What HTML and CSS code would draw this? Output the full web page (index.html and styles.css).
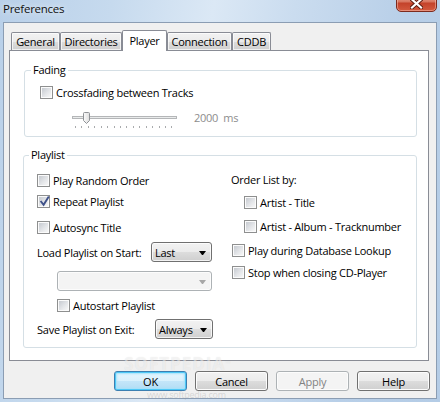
FILE: index.html
```html
<!DOCTYPE html>
<html>
<head>
<meta charset="utf-8">
<title>Preferences</title>
<link rel="stylesheet" href="styles.css">
</head>
<body>
<div class="window">
  <div class="titlebar">
    <span class="title">Preferences</span>
    <div class="close">
      <svg width="13" height="11" viewBox="0 0 13 11"><path d="M2 1.5 L11 9.5 M11 1.5 L2 9.5" stroke="#5a1a10" stroke-width="4" stroke-linecap="square"/><path d="M2 1.5 L11 9.5 M11 1.5 L2 9.5" stroke="#fff" stroke-width="2.2" stroke-linecap="square"/></svg>
    </div>
  </div>
  <div class="client">
    <div class="tabs">
      <div class="tab t-general">General</div>
      <div class="tab t-dirs">Directories</div>
      <div class="tab active t-player">Player</div>
      <div class="tab t-conn">Connection</div>
      <div class="tab t-cddb">CDDB</div>
    </div>
    <div class="panel">
      <fieldset class="group fading">
        <legend>Fading</legend>
        <div class="fading-body">
          <div class="row"><span class="cb"></span><span>Crossfading between Tracks</span></div>
          <div class="slider-row">
            <svg class="slider" width="110" height="24" viewBox="0 0 110 24">
              <defs>
                <linearGradient id="thumb" x1="0" y1="0" x2="1" y2="0">
                  <stop offset="0" stop-color="#fbfbfb"/>
                  <stop offset="1" stop-color="#dedede"/>
                </linearGradient>
              </defs>
              <rect x="1.5" y="8.5" width="104" height="2" fill="#e9ebeb" stroke="#b4b6b8"/>
              <path d="M12.5 5.5 Q12.5 4.5 13.5 4.5 H17.5 Q18.5 4.5 18.5 5.5 V12.5 L15.5 15.5 L12.5 12.5 Z" fill="url(#thumb)" stroke="#8f9296"/>
              <g stroke="#a9abad" stroke-width="1">
                <line x1="4.5" y1="18" x2="4.5" y2="20"/>
                <line x1="10.5" y1="18" x2="10.5" y2="20"/>
                <line x1="17.5" y1="18" x2="17.5" y2="20"/>
                <line x1="23.5" y1="18" x2="23.5" y2="20"/>
                <line x1="30.5" y1="18" x2="30.5" y2="20"/>
                <line x1="36.5" y1="18" x2="36.5" y2="20"/>
                <line x1="43.5" y1="18" x2="43.5" y2="20"/>
                <line x1="49.5" y1="18" x2="49.5" y2="20"/>
                <line x1="55.5" y1="18" x2="55.5" y2="20"/>
                <line x1="62.5" y1="18" x2="62.5" y2="20"/>
                <line x1="68.5" y1="18" x2="68.5" y2="20"/>
                <line x1="75.5" y1="18" x2="75.5" y2="20"/>
                <line x1="81.5" y1="18" x2="81.5" y2="20"/>
                <line x1="88.5" y1="18" x2="88.5" y2="20"/>
                <line x1="94.5" y1="18" x2="94.5" y2="20"/>
                <line x1="100.5" y1="18" x2="100.5" y2="20"/>
              </g>
            </svg>
            <span class="slider-value">2000&nbsp; ms</span>
          </div>
        </div>
      </fieldset>

      <fieldset class="group playlist">
        <legend>Playlist</legend>
        <div class="playlist-body">
          <div class="col col-left">
            <div class="row r1"><span class="cb"></span><span>Play Random Order</span></div>
            <div class="row r2"><span class="cb checked"><svg width="13" height="13" viewBox="0 0 13 13"><path d="M3.6 6 L6.6 9.8 L11.8 1.6" fill="none" stroke="#3f5189" stroke-width="1.9"/></svg></span><span>Repeat Playlist</span></div>
            <div class="row r3"><span class="cb"></span><span>Autosync Title</span></div>
            <div class="row r4"><span class="lbl lbl-load">Load Playlist on Start:</span><div class="combo combo-last"><span>Last</span><span class="arrow"></span></div></div>
            <div class="row r5"><div class="combo disabled combo-empty"><span class="arrow"></span></div></div>
            <div class="row r6"><span class="cb"></span><span>Autostart Playlist</span></div>
            <div class="row r7"><span class="lbl lbl-save">Save Playlist on Exit:</span><div class="combo combo-always"><span>Always</span><span class="arrow"></span></div></div>
          </div>
          <div class="col col-right">
            <div class="row q1"><span class="order-lbl">Order List by:</span></div>
            <div class="row q2 indent"><span class="cb"></span><span>Artist - Title</span></div>
            <div class="row q3 indent"><span class="cb"></span><span>Artist - Album - Tracknumber</span></div>
            <div class="row q4"><span class="cb"></span><span>Play during Database Lookup</span></div>
            <div class="row q5"><span class="cb"></span><span>Stop when closing CD-Player</span></div>
          </div>
        </div>
      </fieldset>
    </div>
    <div class="buttons">
      <div class="btn default">OK</div>
      <div class="btn">Cancel</div>
      <div class="btn disabled">Apply</div>
      <div class="btn">Help</div>
    </div>
  </div>
  <div class="wm-logo">SOFTPEDIA<span class="tm">™</span></div>
  <div class="wm-url">www.softpedia.com</div>
</div>
</body>
</html>
```
FILE: styles.css
```css
body {
  margin: 0;
}

.window {
  position: relative;
  width: 440px;
  height: 402px;
  overflow: hidden;
  display: flex;
  flex-direction: column;
  background: linear-gradient(100deg, #b9d0e9 0%, #c6daee 22%, #dbe8f5 42%, #cadcef 58%, #b8cfe8 80%, #b4cce6 100%);
  font-family: "Open Sans", "Segoe UI", sans-serif;
  font-size: 11px;
  letter-spacing: -0.25px;
  color: #000;
}

.titlebar {
  height: 22px;
  display: flex;
  align-items: flex-start;
  flex: none;
}

.title {
  margin: 1px 0 0 3px;
  line-height: 16px;
  font-size: 11.5px;
  color: #101010;
  text-shadow: 0 0 6px rgba(255, 255, 255, 0.9);
}

.close {
  margin: -6px 3px 0 auto;
  width: 41px;
  height: 18px;
  box-sizing: border-box;
  border: 1px solid #7d2a1d;
  border-radius: 0 0 5px 5px;
  background: linear-gradient(#eaa898 0%, #d97a64 40%, #c4432b 52%, #d35a3f 100%);
  box-shadow: inset 0 0 0 1px rgba(255, 210, 200, 0.45);
  display: flex;
  align-items: center;
  justify-content: center;
  padding-top: 1px;
}

.close svg {
  display: block;
}

.client {
  margin: 0 3px;
  height: 377px;
  box-sizing: border-box;
  border: 1px solid #8b9db3;
  background: #f0f0f0;
  padding: 7px 7px 0 5px;
  display: flex;
  flex-direction: column;
  flex: none;
}

/* Tabs */
.tabs {
  display: flex;
  align-items: flex-end;
  height: 20px;
  margin-left: 2px;
  flex: none;
}

.tab {
  height: 18px;
  box-sizing: border-box;
  border: 1px solid #898c95;
  border-bottom: none;
  border-radius: 2px 2px 0 0;
  background: linear-gradient(#f2f2f2 0%, #ebebeb 50%, #dddddd 50%, #cfcfcf 100%);
  box-shadow: inset 0 0 0 1px rgba(255, 255, 255, 0.7);
  display: flex;
  align-items: center;
  justify-content: center;
  flex: none;
}

.tab.active {
  height: 21px;
  margin-bottom: -1px;
  padding-bottom: 2px;
  background: #fff;
  box-shadow: none;
  position: relative;
  z-index: 1;
}

.t-general { width: 49px; }
.t-dirs { width: 62px; }
.t-player { width: 45px; }
.t-conn { width: 65px; }
.t-cddb { width: 39px; }

.panel {
  height: 311px;
  box-sizing: border-box;
  border: 1px solid #898c95;
  background: #fff;
  padding-top: 11px;
  flex: none;
}

/* Group boxes */
.group {
  margin: 0;
  padding: 0;
  min-width: 0;
  box-sizing: border-box;
  border: 1px solid #d5dfe5;
  border-radius: 3px;
}

.group legend {
  padding: 0 2px;
  margin-left: 6px;
  line-height: 16px;
}

.fading {
  margin-left: 14px;
  width: 393px;
}

.playlist {
  margin: 10px 0 0 13px;
  width: 394px;
}

.playlist legend {
  margin-left: 5px;
}

.fading-body {
  padding: 4px 0 4px 15px;
}

.row {
  display: flex;
  align-items: center;
  height: 20px;
  white-space: nowrap;
}

.slider-row {
  display: flex;
  align-items: flex-start;
  height: 24px;
  margin-top: 6px;
}

.slider {
  display: block;
  margin-left: 31px;
  flex: none;
}

.slider-value {
  margin: 2px 0 0 13px;
  line-height: 16px;
  color: #8d8d8d;
}

/* Checkboxes */
.cb {
  position: relative;
  width: 13px;
  height: 13px;
  box-sizing: border-box;
  border: 1px solid #8e8f8f;
  padding: 1px;
  background: linear-gradient(135deg, #c6cad0 0%, #e3e5e8 55%, #f7f7f7 100%) content-box, #fbfbfb;
  margin-right: 3px;
  flex: none;
}

.cb.checked svg {
  position: absolute;
  left: -1px;
  top: -1px;
}

/* Playlist columns */
.playlist-body {
  display: grid;
  grid-template-columns: 195px 1fr;
  padding: 0 0 8px 13px;
}

.col-left {
  padding-top: 7px;
}

.r2 { margin-top: 1px; }
.r3 { margin-top: 6px; }
.r4 { margin-top: 5px; }
.r5 { margin-top: 9px; padding-left: 20px; }
.r6 { margin-top: 4px; padding-left: 20px; }
.r7 { margin-top: 4px; }

.col-right {
  padding-top: 6px;
}

.order-lbl {
  margin-left: -1px;
}

.q2 { margin-top: 3px; }
.q3 { margin-top: 4px; }
.q4 { margin-top: 4px; }
.q5 { margin-top: 2px; }

.indent {
  padding-left: 12px;
}

.lbl-load {
  width: 114px;
  flex: none;
}

.lbl-save {
  width: 118px;
  flex: none;
}

/* Combo boxes */
.combo {
  height: 20px;
  box-sizing: border-box;
  border: 1px solid #707070;
  border-radius: 3px;
  background: linear-gradient(#f2f2f2 0%, #ebebeb 50%, #dddddd 50%, #cfcfcf 100%);
  box-shadow: inset 0 0 0 1px rgba(255, 255, 255, 0.75);
  display: flex;
  align-items: center;
  padding-left: 3px;
  flex: none;
}

.combo-last { width: 61px; }
.combo-always { width: 58px; }
.combo-empty { width: 155px; }

.combo .arrow {
  width: 1px;
  height: 0;
  border-top: 4px solid #000;
  border-left: 3px solid transparent;
  border-right: 3px solid transparent;
  margin: 1px 5px 0 auto;
}

.combo.disabled {
  border-color: #adb2b5;
  background: #f4f4f4;
  box-shadow: inset 0 0 0 1px #fcfcfc;
}

.combo.disabled .arrow {
  border-top-color: #a7a7a7;
}

/* Buttons */
.buttons {
  display: flex;
  justify-content: flex-end;
  gap: 8px;
  margin: 10px -1px 0 0;
  flex: none;
}

.btn {
  width: 73px;
  height: 20px;
  box-sizing: border-box;
  border: 1px solid #707070;
  border-radius: 3px;
  background: linear-gradient(#f2f2f2 0%, #ebebeb 50%, #dddddd 50%, #cfcfcf 100%);
  box-shadow: inset 0 0 0 1px #fcfcfc;
  display: flex;
  align-items: center;
  justify-content: center;
}

.btn.default {
  border-color: #3c7fb1;
  background: linear-gradient(#e6f5fd 0%, #d9f0fc 50%, #c4e6f9 50%, #b3dcf4 100%);
  box-shadow: inset 0 0 0 1px #4ec8f6, inset 0 0 2px 2px #a6e2fa;
}

.btn.disabled {
  border-color: #adb2b5;
  background: #f4f4f4;
  box-shadow: inset 0 0 0 1px #fcfcfc;
  color: #838383;
}

/* Watermark */
.wm-logo {
  position: absolute;
  left: 124px;
  top: 356px;
  font-size: 17px;
  line-height: 15px;
  font-weight: bold;
  letter-spacing: 1px;
  color: rgba(255, 255, 255, 0.5);
  text-shadow: 0 0 1px rgba(0, 0, 0, 0.1);
  pointer-events: none;
}

.wm-logo .tm {
  font-size: 7px;
  vertical-align: top;
}

.wm-url {
  position: absolute;
  left: 147px;
  top: 390px;
  font-size: 9px;
  line-height: 10px;
  color: rgba(150, 150, 150, 0.3);
  pointer-events: none;
}
```
